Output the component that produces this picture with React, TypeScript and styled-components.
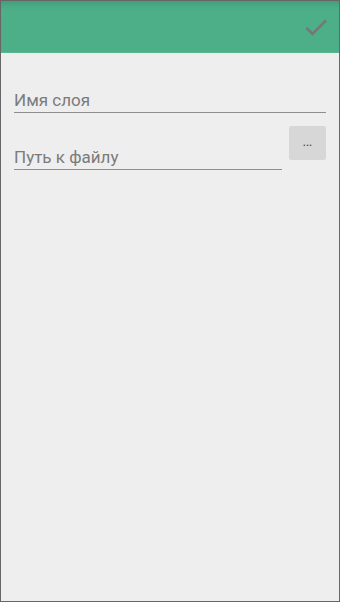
import React from 'react';
import styled, {createGlobalStyle} from "styled-components";

const GlobalStyle = createGlobalStyle`
  html, body {
    margin: 0;
    padding: 0;
    background: #eeeeee;
  }
  * {
    box-sizing: border-box;
  }
`

export default function App() {
    return (
        <>
            <GlobalStyle/>
            <Screen>
                <Toolbar>
                    <CheckIcon viewBox="0 0 24 20">
                        <path d="M2.5 10 L8.5 16 L22 2.5" fill="none" stroke="#777777" strokeWidth="2.6"/>
                    </CheckIcon>
                </Toolbar>
                <Content>
                    <Field>Имя слоя</Field>
                    <Row>
                        <Field $offset={21}>Путь к файлу</Field>
                        <BrowseButton>...</BrowseButton>
                    </Row>
                </Content>
            </Screen>
        </>
    );
}

const Screen = styled.div`
  width: 340px;
  height: 602px;
  border: 1px solid #666666;
  background: #eeeeee;
  display: flex;
  flex-direction: column;
  font-family: Roboto, "Noto Sans", sans-serif;
`

const Toolbar = styled.header`
  height: 52px;
  flex-shrink: 0;
  background: linear-gradient(180deg, #429d7b 0px, #4aaa84 5px, #4caf87 9px);
  border-bottom: 1px solid #55b891;
  display: flex;
  align-items: center;
  justify-content: flex-end;
  padding-right: 11px;
`

const CheckIcon = styled.svg`
  width: 24px;
  height: 20px;
  margin-top: 2px;
`

const Content = styled.div`
  padding: 37px 13px 0 13px;
  display: flex;
  flex-direction: column;
`

const Field = styled.div<{ $offset?: number }>`
  flex: 1;
  margin-top: ${(p) => p.$offset ?? 0}px;
  font-size: 17px;
  line-height: 20px;
  color: #7b7b7b;
  padding-bottom: 2px;
  border-bottom: 1.5px solid #8e8e8e;
`

const Row = styled.div`
  display: flex;
  align-items: flex-start;
  margin-top: 13px;
`

const BrowseButton = styled.div`
  width: 37px;
  height: 34px;
  margin-left: 7px;
  background: #d6d7d6;
  border-radius: 2px;
  display: flex;
  align-items: center;
  justify-content: center;
  font-size: 12px;
  color: #333333;
  padding-bottom: 2px;
`
